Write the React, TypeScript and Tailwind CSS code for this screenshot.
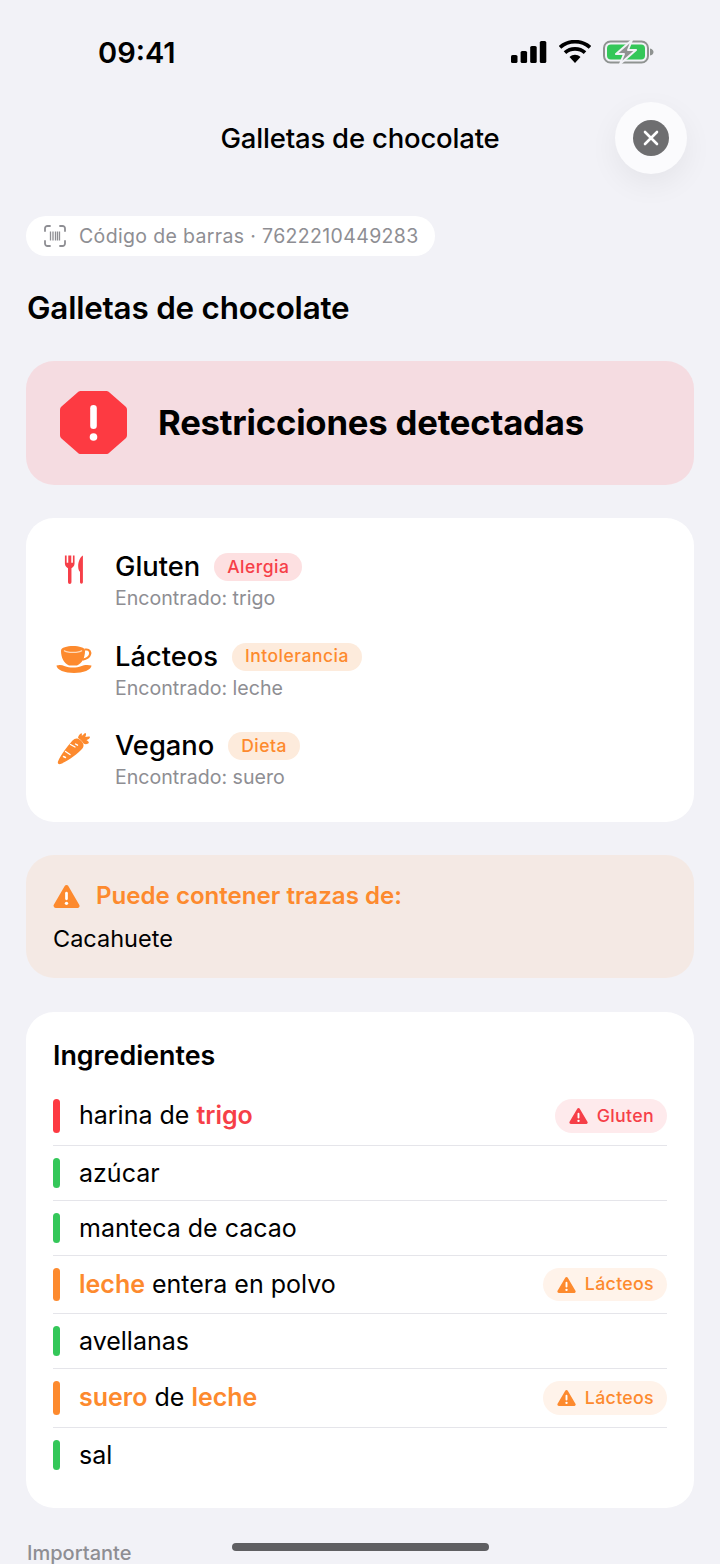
const RED = "text-[#f63f48]";
const ORANGE = "text-[#fd8a2e]";

function Triangle({ className }: { className: string }) {
  return (
    <svg viewBox="0 0 26 24" className={className}>
      <path d="M13 3 L23.5 21 H2.5 Z" fill="currentColor" stroke="currentColor" strokeWidth="4" strokeLinejoin="round" />
      <rect x="11.7" y="7.5" width="2.6" height="8" rx="1.3" fill="#fff" />
      <circle cx="13" cy="18.6" r="1.6" fill="#fff" />
    </svg>
  );
}

function StatusIcons() {
  return (
    <div className="flex items-center">
      <svg width="36" height="24" viewBox="0 0 36 24" className="mr-[12px]">
        <rect x="0" y="15" width="6.5" height="8" rx="1.6" fill="#000" />
        <rect x="9.6" y="11" width="6.5" height="12" rx="1.6" fill="#000" />
        <rect x="19.2" y="6" width="6.5" height="17" rx="1.6" fill="#000" />
        <rect x="28.8" y="1" width="6.5" height="22" rx="1.6" fill="#000" />
      </svg>
      <svg width="32" height="24" viewBox="0 0 32 24" className="mr-[12px]">
        <path d="M16 23 L10.5 17 C14 14 18 14 21.5 17 Z" fill="#000" />
        <path d="M6 12.6 C11.6 7.6 20.4 7.6 26 12.6" fill="none" stroke="#000" strokeWidth="3.8" />
        <path d="M1 7.4 C9.4 -0.2 22.6 -0.2 31 7.4" fill="none" stroke="#000" strokeWidth="3.8" />
      </svg>
      <svg width="51" height="26" viewBox="0 0 51 26">
        <rect x="1" y="2.5" width="44" height="21" rx="6.5" fill="none" stroke="#8f9391" strokeWidth="2" />
        <rect x="4" y="5.5" width="38" height="15" rx="4" fill="#34c759" />
        <path d="M47 9.5 C49.5 10 50.5 11.5 50.5 13 C50.5 14.5 49.5 16 47 16.5 Z" fill="#8f9391" />
        <path d="M29 1 L13 15 H21 L17 25 L33 11 H25 Z" fill="#8f9391" stroke="#f2f2f7" strokeWidth="2" strokeLinejoin="round" />
      </svg>
    </div>
  );
}

function ForkKnife() {
  return (
    <svg width="20" height="31" viewBox="0 0 22 33" className={RED}>
      <path d="M1 1 V10 C1 13 3 14.5 4.4 15 V30.5 a1.9 1.9 0 0 0 3.8 0 V15 C9.6 14.5 11.6 13 11.6 10 V1 H9.8 V9 H8 V1 H4.7 V9 H2.9 V1 Z" fill="currentColor" />
      <path d="M20.8 1 C17.5 3 15.6 8 15.6 13 C15.6 16.5 16.4 18 17.6 19 V30.5 a1.6 1.6 0 0 0 3.2 0 Z" fill="currentColor" />
    </svg>
  );
}

function Cup() {
  return (
    <svg width="36" height="28" viewBox="0 0 36 28" className={ORANGE}>
      <path d="M5 5.5 C5 -0.5 29 -0.5 29 5.5 C29 13 26 18 21 20.5 H13 C8 18 5 13 5 5.5 Z" fill="currentColor" />
      <path d="M8 5.5 C11 8 23 8 26 5.5" fill="none" stroke="#ffd9b8" strokeWidth="1.2" />
      <path d="M28.5 4.5 H30.5 C33.5 4.5 34.8 7 34 9.5 C33.2 12.4 30 14 26.5 14.6" fill="none" stroke="currentColor" strokeWidth="2.2" />
      <path d="M0.5 20.5 C3 19.5 6 19.8 9 21.2 C13 23 21 23 25 21.2 C28 19.8 32 19.5 35.5 20.5 C35.5 25 27 28 18 28 C9 28 0.5 25 0.5 20.5 Z" fill="currentColor" />
    </svg>
  );
}

function Carrot() {
  return (
    <svg width="34" height="33" viewBox="0 0 34 33" className={ORANGE}>
      <path d="M20 6.5 C23 6.8 26 10 26.5 13 C26.7 15 25.5 16.5 24 18 C18 24 9 30 3.5 32 C1.5 32.6 0.3 31.2 1 29.5 C3.5 23.5 10 14.5 15.5 8.5 C17 7 18.5 6.3 20 6.5 Z" fill="currentColor" />
      <path d="M21 6 C21 3.5 23.5 1.5 24.5 1 C25 2 25 3 24.8 4 C26 3 27.5 1 28.5 1 C29.5 1.5 29 3.5 28.3 5 C30 4.6 32.5 4 33 5 C33 6.5 31 7.5 29.5 8.2 C31 8.8 32 9.8 31.8 10.8 C30.8 12.6 27.8 12.4 26.5 11.5 C25 9 23 7 21 6 Z" fill="currentColor" />
      <path d="M13.5 12.5 L18 15 M18.5 12 L20.5 13.2 M8.5 19.5 L13 22.5 M6.5 24.5 L8.5 25.5" stroke="#fff" strokeWidth="1.4" strokeLinecap="round" />
    </svg>
  );
}

function Restriction({ icon, name, tag, found, tagClass }: { icon: React.ReactNode; name: string; tag: string; found: string; tagClass: string }) {
  return (
    <div className="flex h-[60px]">
      <div className="w-[56px] flex justify-center h-[34px] items-center mr-[13px] shrink-0">{icon}</div>
      <div>
        <div className="flex items-center h-[30px]">
          <span className="text-[27.3px] leading-[30px] font-medium text-black">{name}</span>
          <span className={"ml-[14px] h-[28px] px-[13px] rounded-full flex items-center text-[17.5px] font-medium tracking-[0.5px] " + tagClass}>{tag}</span>
        </div>
        <div className="text-[19.6px] leading-[24px] mt-[4px] text-[#8e8e93]">Encontrado: {found}</div>
      </div>
    </div>
  );
}

type Part = { t: string; c?: string };

function Ingredient({ bar, parts, badge, badgeH = "h-[34px]", last }: { bar: string; parts: Part[]; badge?: "Gluten" | "Lácteos"; badgeH?: string; last?: boolean }) {
  return (
    <div className={"flex items-center py-[12px] " + (last ? "" : "border-b border-[#e5e5ea]")}>
      <div className={"w-[7px] self-stretch rounded-full mr-[19px] " + bar} />
      <div className={"flex-1 text-[25px] leading-[30px] text-black " + (badge ? "pb-[2px]" : "")}>
        {parts.map((p, i) => (
          <span key={i} className={p.c ? p.c + " font-semibold" : ""}>{p.t}</span>
        ))}
      </div>
      {badge === "Gluten" && (
        <div className={badgeH + " pl-[14px] pr-[13px] rounded-full bg-[#feeaec] flex items-center text-[17.8px] font-medium tracking-[0.3px] " + RED}>
          <Triangle className="w-[19px] h-[18px] mr-[9px]" />Gluten
        </div>
      )}
      {badge === "Lácteos" && (
        <div className={badgeH + " pl-[14px] pr-[13px] rounded-full bg-[#fff3ea] flex items-center text-[17.8px] font-medium tracking-[0.3px] " + ORANGE}>
          <Triangle className="w-[19px] h-[18px] mr-[9px]" />Lácteos
        </div>
      )}
    </div>
  );
}

export default function App() {
  return (
    <div className="relative w-[720px] h-[1564px] overflow-hidden bg-[#f2f2f7] font-['Inter',sans-serif] text-black antialiased">
      <div className="h-[102px] flex items-start justify-between pt-[36px] pl-[98px] pr-[66px]">
        <span className="text-[29px] leading-[34px] font-semibold">09:41</span>
        <div className="mt-[3px]"><StatusIcons /></div>
      </div>

      <div className="relative h-[72px] flex items-center justify-center">
        <span className="text-[27.5px] font-medium leading-[32px] tracking-[-0.2px]">Galletas de chocolate</span>
        <div className="absolute right-[33px] top-0 w-[72px] h-[72px] rounded-full bg-[#fbfbfd] shadow-[0_10px_30px_rgba(0,0,0,0.06)] flex items-center justify-center">
          <div className="w-[36px] h-[36px] rounded-full bg-[#6e6e70] flex items-center justify-center">
            <svg width="16" height="16" viewBox="0 0 16 16">
              <path d="M2 2 L14 14 M14 2 L2 14" stroke="#fff" strokeWidth="2.6" strokeLinecap="round" />
            </svg>
          </div>
        </div>
      </div>

      <div className="px-[26px]">
        <div className="mt-[42px] inline-flex h-[40px] items-center rounded-full bg-white pl-[18px] pr-[16px]">
          <svg width="22" height="22" viewBox="0 0 22 22" className="mr-[13px]">
            <path d="M1 6 V3.5 A2.5 2.5 0 0 1 3.5 1 H6 M16 1 H18.5 A2.5 2.5 0 0 1 21 3.5 V6 M21 16 V18.5 A2.5 2.5 0 0 1 18.5 21 H16 M6 21 H3.5 A2.5 2.5 0 0 1 1 18.5 V16" fill="none" stroke="#8e8e93" strokeWidth="1.8" strokeLinecap="round" />
            <path d="M6.5 6.5 V15.5 M9 6.5 V15.5 M11.5 6.5 V15.5 M13.5 6.5 V15.5 M15.5 6.5 V15.5" stroke="#8e8e93" strokeWidth="1.3" />
          </svg>
          <span className="text-[19.5px] leading-[24px] text-[#8e8e93] tracking-[0.35px]">Código de barras · 7622210449283</span>
        </div>

        <h1 className="mt-[32px] ml-[1px] h-[40px] text-[31.4px] leading-[40px] font-semibold tracking-[-0.2px]">Galletas de chocolate</h1>

        <div className="mt-[33px] h-[124px] rounded-[28px] bg-[#f5dce1] flex items-center pl-[34px]">
          <svg width="67" height="63" viewBox="0 0 67 63" className="mr-[31px] mt-[-2px]">
            <path d="M21 0 H46 C47.5 0 48.5 0.5 49.5 1.5 L65.5 15.5 C66.5 16.5 67 17.5 67 19 V44 C67 45.5 66.5 46.5 65.5 47.5 L49.5 61.5 C48.5 62.5 47.5 63 46 63 H21 C19.5 63 18.5 62.5 17.5 61.5 L1.5 47.5 C0.5 46.5 0 45.5 0 44 V19 C0 17.5 0.5 16.5 1.5 15.5 L17.5 1.5 C18.5 0.5 19.5 0 21 0 Z" fill="#fd3a42" />
            <rect x="30.2" y="14" width="6.6" height="24" rx="3.3" fill="#fff" />
            <circle cx="33.5" cy="46" r="3.8" fill="#fff" />
          </svg>
          <span className="text-[34.7px] leading-[40px] font-bold tracking-[-0.2px] mt-[-2px]">Restricciones detectadas</span>
        </div>

        <div className="mt-[33px] h-[304px] rounded-[28px] bg-white pt-[34px] pl-[20px] flex flex-col gap-[29.5px]">
          <Restriction icon={<ForkKnife />} name="Gluten" tag="Alergia" found="trigo" tagClass="bg-[#fde0e1] text-[#f63f48]" />
          <Restriction icon={<Cup />} name="Lácteos" tag="Intolerancia" found="leche" tagClass="bg-[#fdebdc] text-[#fd8a2e]" />
          <Restriction icon={<Carrot />} name="Vegano" tag="Dieta" found="suero" tagClass="bg-[#fdebdc] text-[#fd8a2e]" />
        </div>

        <div className="mt-[33px] h-[123px] rounded-[28px] bg-[#f4e9e4] pt-[28px] px-[27px]">
          <div className={"flex items-center h-[26px] " + ORANGE}>
            <Triangle className="w-[27px] h-[25px] mr-[16px]" />
            <span className="text-[24.1px] leading-[26px] font-semibold">Puede contener trazas de:</span>
          </div>
          <div className="mt-[16px] text-[23.5px] leading-[28px]">Cacahuete</div>
        </div>

        <div className="mt-[34px] h-[496px] rounded-[28px] bg-white pt-[27px] px-[27px]">
          <div className="text-[26.8px] leading-[32px] font-semibold mb-[16px]">Ingredientes</div>
          <Ingredient bar="bg-[#fd3a42]" parts={[{ t: "harina de " }, { t: "trigo", c: RED }]} badge="Gluten" />
          <Ingredient bar="bg-[#34c759]" parts={[{ t: "azúcar" }]} />
          <Ingredient bar="bg-[#34c759]" parts={[{ t: "manteca de cacao" }]} />
          <Ingredient bar="bg-[#fd8a2e]" parts={[{ t: "leche", c: ORANGE }, { t: " entera en polvo" }]} badge="Lácteos" badgeH="h-[33px]" />
          <Ingredient bar="bg-[#34c759]" parts={[{ t: "avellanas" }]} />
          <Ingredient bar="bg-[#fd8a2e]" parts={[{ t: "suero", c: ORANGE }, { t: " de " }, { t: "leche", c: ORANGE }]} badge="Lácteos" />
          <Ingredient bar="bg-[#34c759]" parts={[{ t: "sal" }]} last />
        </div>

        <div className="mt-[32px] ml-[1px] text-[20px] leading-[26px] font-medium text-[#8e8e93]">Importante</div>
      </div>

      <div className="absolute left-[232px] top-[1543px] w-[257px] h-[8px] rounded-full bg-[#5f5f62]" />
    </div>
  );
}
